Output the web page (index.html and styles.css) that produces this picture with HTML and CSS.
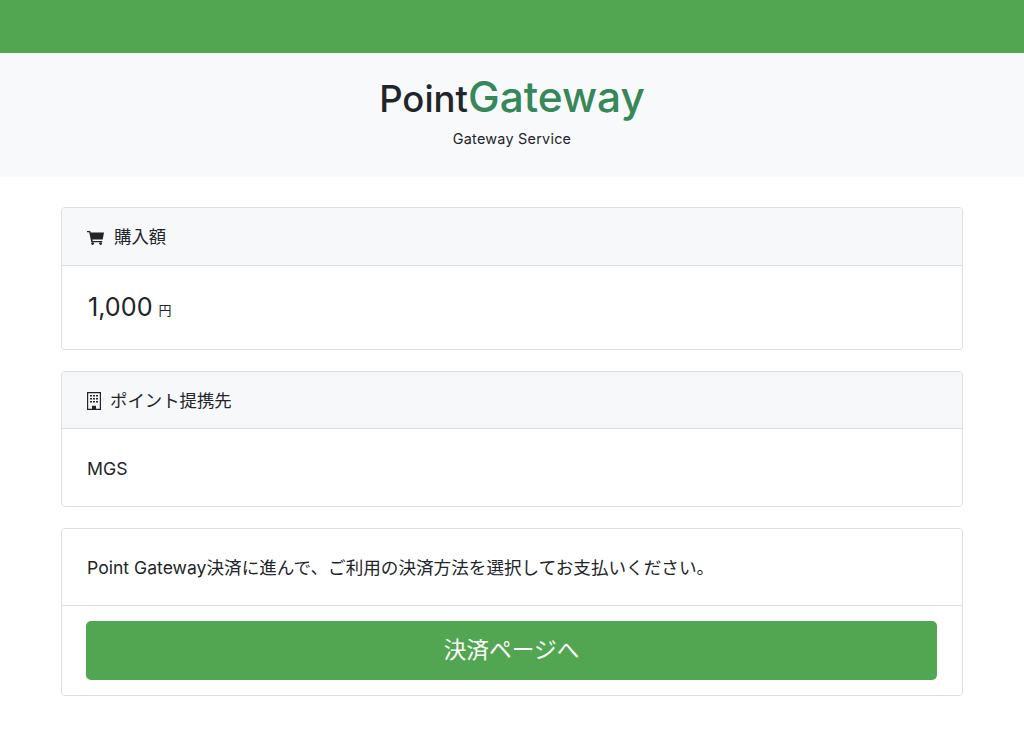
FILE: index.html
```html
<!DOCTYPE html>
<html lang="ja">
<head>
<meta charset="utf-8">
<title>Point Gateway</title>
<link rel="stylesheet" href="styles.css">
</head>
<body>
<div class="topbar"></div>
<header class="brand">
  <div class="logo"><span class="logo-a">Point</span><span class="logo-b">Gateway</span></div>
  <div class="sub">Gateway Service</div>
</header>
<main class="wrap">
  <section class="card">
    <div class="card-head">
      <svg class="icon cart" viewBox="0 0 17 14"><path fill="#212529" d="M0 0h3.2l.5 1.6H17l-1.3 6.9H5.4l.3 1.4h9.6v1.3H4.3L2.2 1.3H0z"/><circle fill="#212529" cx="5.6" cy="12.6" r="1.4"/><circle fill="#212529" cx="13.6" cy="12.6" r="1.4"/></svg>
      <span>購入額</span>
    </div>
    <div class="card-body amount-body"><span class="amount">1,000</span> <span class="yen">円</span></div>
  </section>
  <section class="card">
    <div class="card-head head-b">
      <svg class="icon building" viewBox="0 0 14 18"><path fill="#212529" fill-rule="evenodd" d="M0 0h14v18H0zM1.2 1.2v15.6h3.8v-3h4v3h3.8V1.2z"/><path fill="#212529" d="M3 3h2v1.5H3zM6 3h2v1.5H6zM9 3h2v1.5H9zM3 6h2v1.5H3zM6 6h2v1.5H6zM9 6h2v1.5H9zM3 9h2v1.5H3zM6 9h2v1.5H6zM9 9h2v1.5H9z"/><path fill="#212529" d="M5 14h4v3H5z"/></svg>
      <span>ポイント提携先</span>
    </div>
    <div class="card-body body-b">MGS</div>
  </section>
  <section class="card">
    <div class="card-body msg">Point Gateway決済に進んで、ご利用の決済方法を選択してお支払いください。</div>
    <div class="card-foot"><a class="btn" href="#">決済ページへ</a></div>
  </section>
</main>
</body>
</html>
```
FILE: styles.css
```css
* { box-sizing: border-box; }
html, body { margin: 0; padding: 0; }
body {
  background: #fff;
  color: #212529;
  font-family: Inter, "Noto Sans CJK JP", sans-serif;
  font-size: 17.7px;
  line-height: 1.5;
}
.topbar { height: 53px; background: #53a651; }
.brand {
  height: 124px;
  background: #f8f9fa;
  text-align: center;
  padding-top: 17px;
}
.logo { font-size: 40px; line-height: 54px; font-weight: 500; }
.logo-a { color: #212529; font-size: 36.5px; }
.logo-b { color: #36875a; font-size: 42.4px; }
.sub { font-size: 14.4px; line-height: 21px; margin-top: 2px; letter-spacing: 0.25px; }
.wrap { padding: 30px 61px 0; display: flex; flex-direction: column; gap: 21px; }
.card { border: 1px solid #dcdfe2; border-radius: 4px; background: #fff; overflow: hidden; }
.card-head {
  height: 58px;
  background: #f7f8fa;
  border-bottom: 1px solid #dcdfe2;
  padding: 2px 25px 0;
  display: flex;
  align-items: center;
  gap: 10px;
  font-size: 17.4px;
}
.head-b { height: 57px; gap: 9px; padding-top: 2px; }
.icon { display: block; flex: none; }
.cart { width: 17px; height: 14px; }
.building { width: 14px; height: 18px; }
.card-body { padding: 28px 25px 25px; line-height: 24px; }
.amount-body { height: 83px; padding-top: 23px; padding-left: 26px; }
.body-b { height: 77px; }
.amount { font-size: 25.2px; font-weight: 430; line-height: 36px; }
.yen { font-size: 13px; margin-left: 1px; position: relative; top: -1px; }
.msg { height: 77px; padding-top: 27px; font-size: 17.6px; border-bottom: 1px solid #dcdfe2; }
.card-foot { padding: 15px 25px 15px 24px; }
.btn {
  display: block;
  height: 59px;
  line-height: 58px;
  background: #53a651;
  color: #fff;
  border-radius: 5px;
  text-align: center;
  font-size: 22.7px;
  text-decoration: none;
}
```
